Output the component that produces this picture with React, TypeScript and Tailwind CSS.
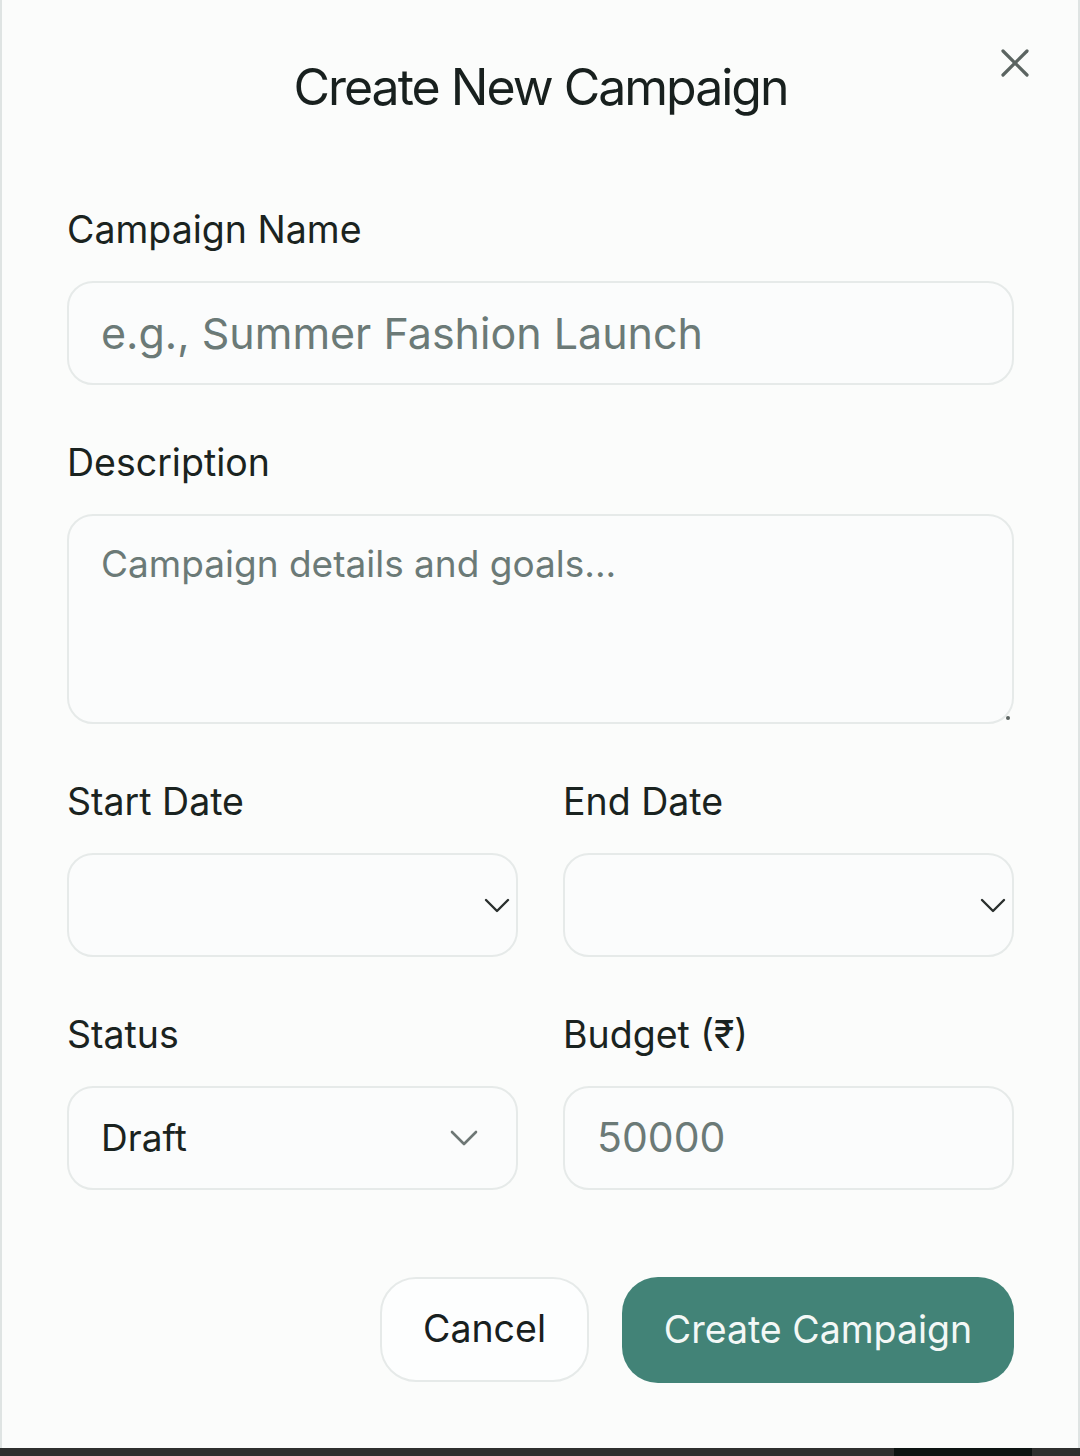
import { X } from 'lucide-react'

const font = { fontFamily: 'Inter, "Noto Sans", sans-serif' }

const Label = ({ children }: { children: React.ReactNode }) => (
  <div className="text-[37.5px] leading-[44px] text-[#1a2320]">{children}</div>
)

const Chevron = ({ w, h, color, sw }: { w: number; h: number; color: string; sw: number }) => (
  <svg width={w + 4} height={h + 4} viewBox={`-2 -2 ${w + 4} ${h + 4}`} fill="none">
    <polyline points={`0,0 ${w / 2},${h} ${w},0`} stroke={color} strokeWidth={sw} strokeLinecap="round" strokeLinejoin="round" />
  </svg>
)

const box = 'rounded-[26px] border-2 border-[#e6eae9] bg-[#fbfcfc]'

const App = () => {
  return (
    <div className="w-[1080px] h-[1456px] flex flex-col bg-[#2f302f]" style={font}>
      <div className="flex-1 flex flex-col bg-[#fbfcfb] border-x-2 border-[#dfe4e3] pl-[65px] pr-[64px]">
        <div className="relative pt-[58px] text-center">
          <h1 className="text-[50px] leading-[58px] text-[#18201e] tracking-[-2px]">Create New Campaign</h1>
          <button className="absolute right-[-25px] top-[39px] text-[#5b6461]">
            <X size={48} strokeWidth={1.6} />
          </button>
        </div>

        <div className="mt-[92px] flex flex-col gap-[56px]">
          <div className="flex flex-col gap-[29px]">
            <Label>Campaign Name</Label>
            <div className={`${box} h-[104px] flex items-center px-[32px] text-[43px] text-[#6b7a77]`}>
              e.g., Summer Fashion Launch
            </div>
          </div>

          <div className="flex flex-col gap-[29px]">
            <Label>Description</Label>
            <div className={`${box} relative h-[210px] px-[32px] pt-[24px] text-[37px] leading-[48px] text-[#6b7a77]`}>
              Campaign details and goals...
              <span className="absolute right-[2px] bottom-[2px] w-[4px] h-[4px] rounded-full bg-[#5b6461]" />
            </div>
          </div>

          <div className="grid grid-cols-2 gap-x-[45px]">
            <div className="flex flex-col gap-[29px]">
              <Label>Start Date</Label>
              <div className={`${box} h-[104px] flex items-center justify-end pr-[6px]`}>
                <Chevron w={22} h={11} color="#2a302e" sw={2.4} />
              </div>
            </div>
            <div className="flex flex-col gap-[29px]">
              <Label>End Date</Label>
              <div className={`${box} h-[104px] flex items-center justify-end pr-[6px]`}>
                <Chevron w={22} h={11} color="#2a302e" sw={2.4} />
              </div>
            </div>
          </div>

          <div className="grid grid-cols-2 gap-x-[45px]">
            <div className="flex flex-col gap-[29px]">
              <Label>Status</Label>
              <div className={`${box} h-[104px] flex items-center justify-between pl-[32px] pr-[38px]`}>
                <span className="text-[37px] text-[#1a2320]">Draft</span>
                <Chevron w={24} h={12} color="#6e7775" sw={2.6} />
              </div>
            </div>
            <div className="flex flex-col gap-[29px]">
              <Label>Budget (₹)</Label>
              <div className={`${box} h-[104px] flex items-center px-[32px] text-[41px] text-[#6b7a77]`}>
                50000
              </div>
            </div>
          </div>
        </div>

        <div className="mt-[87px] flex justify-end gap-[33px]">
          <button className="h-[105px] w-[209px] rounded-[36px] border-2 border-[#e6eae9] bg-[#fdfefe] text-[37.5px] text-[#18201e]">
            Cancel
          </button>
          <button className="h-[106px] w-[392px] rounded-[36px] bg-[#428377] text-[37.5px] text-[#f3f8f6]">
            Create Campaign
          </button>
        </div>
      </div>
      <div className="h-[8px] flex justify-end pr-[48px]">
        <div className="w-[138px] h-full bg-[#0d1412]" />
      </div>
    </div>
  )
}
export default App
